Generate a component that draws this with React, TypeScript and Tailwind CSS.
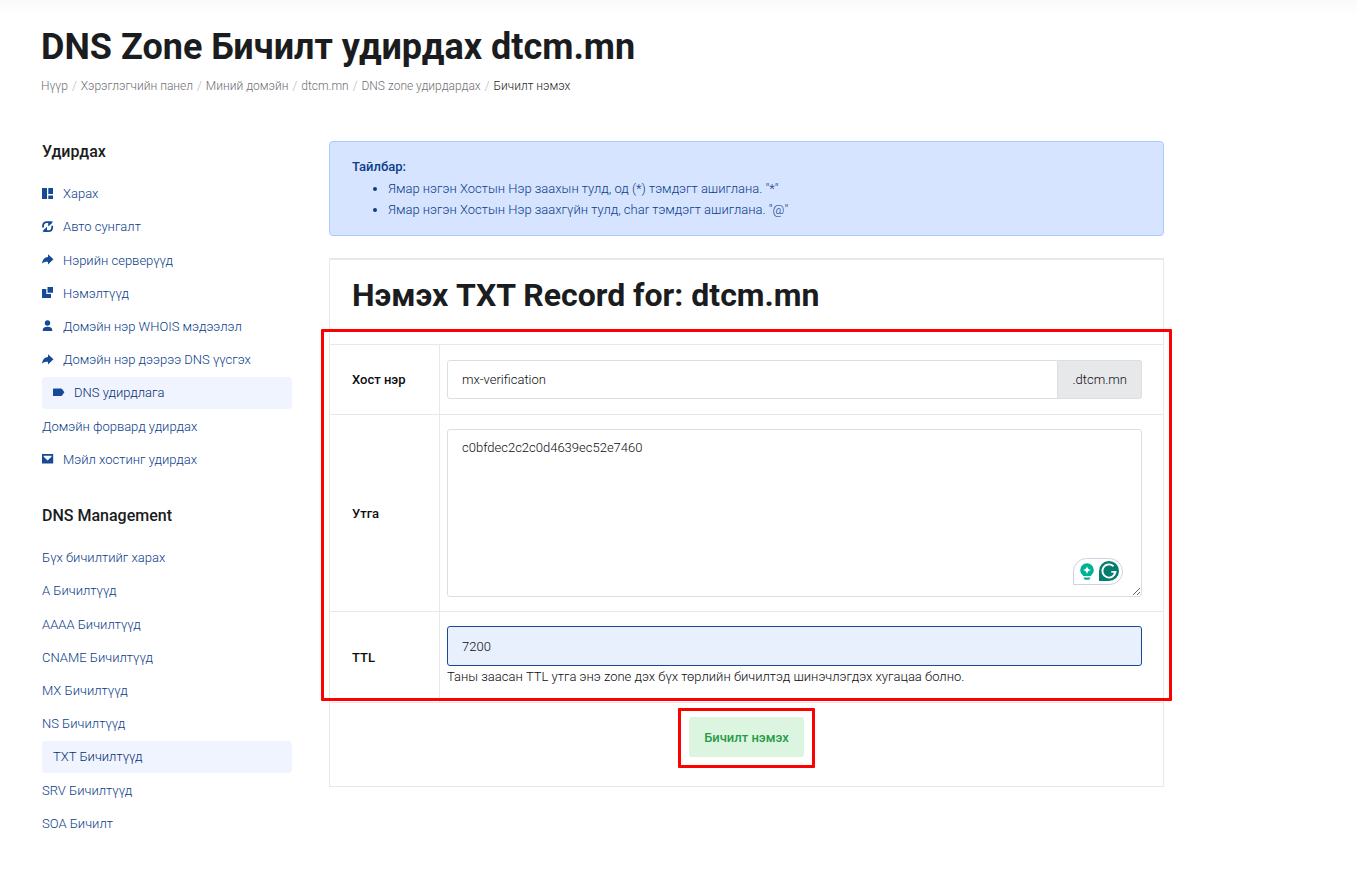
import React from "react";

type NavItem = { label: string; icon?: React.ReactNode; active?: boolean };

const Icon = ({ children }: { children: React.ReactNode }) => (
  <svg viewBox="0 0 12 12" className="h-3 w-3 shrink-0 text-[#174a96]" fill="currentColor" aria-hidden="true">
    {children}
  </svg>
);

const ArrowIcon = () => (
  <Icon>
    <path d="M6 .3 11.500 5.300 6 10.500V7.900C3.800 7.700 1.800 8 0 9.600.4 5.600 3 3.200 6 3Z" />
  </Icon>
);

const manageItems: NavItem[] = [
  {
    label: "Харах",
    icon: (
      <Icon>
        <path d="M0 0h5v11H0zM6.300 0H11v6H6.300zM6.300 7.500H11V11H6.300z" />
      </Icon>
    ),
  },
  {
    label: "Авто сунгалт",
    icon: (
      <Icon>
        <path
          d="M1 6.600V5.400C1 3 2.600 1.200 5 1.200H9.500M10.200 4.800v1.400c0 2.400-1.600 4-4 4H2"
          fill="none"
          stroke="currentColor"
          strokeWidth="1.800"
        />
        <path d="M11.200 0 6.500 5V2zM.2 11.400 4.800 6.400v3zM6.200 1.500h4.500L6.200 5.600zM5 9.900H.6L5 5.800z" />
      </Icon>
    ),
  },
  { label: "Нэрийн серверүүд", icon: <ArrowIcon /> },
  {
    label: "Нэмэлтүүд",
    icon: (
      <Icon>
        <path d="M5.500 0H11v5.700H5.500zM0 2h4.300v5H9v4H0z" />
      </Icon>
    ),
  },
  {
    label: "Домэйн нэр WHOIS мэдээлэл",
    icon: (
      <Icon>
        <circle cx="5.500" cy="3" r="2.700" />
        <path d="M.8 11V9.800c0-2 2-3 4.700-3s4.700 1 4.700 3V11z" />
      </Icon>
    ),
  },
  { label: "Домэйн нэр дээрээ DNS үүсгэх", icon: <ArrowIcon /> },
  {
    label: "DNS удирдлага",
    active: true,
    icon: (
      <Icon>
        <path d="M0 2.200Q0 1.600.6 1.600H8q.6 0 1 .5L11.400 5.300 9 8.600Q8.600 9.100 8 9.100H.6Q0 9.100 0 8.500z" />
      </Icon>
    ),
  },
  { label: "Домэйн форвард удирдах" },
  {
    label: "Мэйл хостинг удирдах",
    icon: (
      <Icon>
        <path fillRule="evenodd" d="M0 1h11.200v9.500H0zM1.700 2.700v1L5.600 7.600l3.900-3.900v-1z" />
      </Icon>
    ),
  },
];

const dnsItems: NavItem[] = [
  { label: "Бүх бичилтийг харах" },
  { label: "A Бичилтүүд" },
  { label: "AAAA Бичилтүүд" },
  { label: "CNAME Бичилтүүд" },
  { label: "MX Бичилтүүд" },
  { label: "NS Бичилтүүд" },
  { label: "TXT Бичилтүүд", active: true },
  { label: "SRV Бичилтүүд" },
  { label: "SOA Бичилт" },
];

const crumbs = ["Нүүр", "Хэрэглэгчийн панел", "Миний домэйн", "dtcm.mn", "DNS zone удирдардах"];

function NavSection({ title, items }: { title: string; items: NavItem[] }) {
  return (
    <nav aria-label={title}>
      <h2 className="mb-[14px] text-base leading-[22px] font-medium text-[#1a1c20]">{title}</h2>
      <ul className="grid min-h-[299px] auto-rows-fr items-center">
        {items.map((item) => (
          <li key={item.label}>
            <a
              href="#"
              aria-current={item.active ? "page" : undefined}
              className={
                item.active
                  ? "flex h-8 items-center gap-[9px] rounded bg-[#f0f4ff] pl-[11px] text-[#062f74]"
                  : "flex h-8 items-center gap-[9px] text-[#0b3d8a]"
              }
            >
              {item.icon}
              {item.label}
            </a>
          </li>
        ))}
      </ul>
    </nav>
  );
}

function FieldRow({ id, label, children }: { id: string; label: string; children: React.ReactNode }) {
  return (
    <div className="grid grid-cols-[110px_1fr] border-t border-[#e7e8ea]">
      <label htmlFor={id} className="flex items-center border-r border-[#e7e8ea] pl-[22px] font-medium text-[#0c0d10]">
        {label}
      </label>
      <div className="py-[14px] pr-[21px] pl-[7px]">{children}</div>
    </div>
  );
}

export default function App() {
  return (
    <div className="min-h-screen bg-white bg-linear-to-b from-[#fafafa] to-white to-[16px] pb-10 font-['Roboto',sans-serif] text-[13px] leading-[21px] font-light text-[#0c0d10]">
      <header className="px-[41px] pt-6">
        <h1 className="text-4xl leading-[46px] font-bold text-[#1a1c20]">DNS Zone Бичилт удирдах dtcm.mn</h1>
        <nav aria-label="Breadcrumb" className="mt-[6px]">
          <ol className="flex flex-wrap text-xs leading-5 text-[#6f7075]">
            {crumbs.map((crumb) => (
              <li key={crumb}>
                <a href="#">{crumb}</a>
                <span className="px-1 text-[#b5b6ba]">/</span>
              </li>
            ))}
            <li className="text-[#26272d]" aria-current="page">
              Бичилт нэмэх
            </li>
          </ol>
        </nav>
      </header>

      <div className="mt-[45px] flex max-w-[1164px] items-start gap-[37px] pl-[42px]">
        <aside className="flex w-[250px] shrink-0 flex-col gap-[29px]">
          <NavSection title="Удирдах" items={manageItems} />
          <NavSection title="DNS Management" items={dnsItems} />
        </aside>

        <main className="min-w-0 flex-1">
          <section className="rounded border border-[#adc8ff] bg-[#d6e4ff] px-[22px] pt-[14px] pb-[15px] text-[#0b3d8a]">
            <strong className="mb-px block font-medium">Тайлбар:</strong>
            <ul className="list-disc pl-9">
              <li>Ямар нэгэн Хостын Нэр заахын тулд, од (*) тэмдэгт ашиглана. "*"</li>
              <li>Ямар нэгэн Хостын Нэр заахгүйн тулд, char тэмдэгт ашиглана. "@"</li>
            </ul>
          </section>

          <form className="mt-[22px] border border-t-2 border-[#e7e8ea]" onSubmit={(e) => e.preventDefault()}>
            <h2 className="px-[22px] pt-[15px] pb-[29px] text-[32px] leading-10 font-bold text-[#1a1c20]">
              Нэмэх TXT Record for: dtcm.mn
            </h2>

            <div className="relative">
              <FieldRow id="host" label="Хост нэр">
                <div className="my-px flex h-[39px]">
                  <input
                    id="host"
                    defaultValue="mx-verification"
                    className="min-w-0 flex-1 rounded-l-[3px] border border-[#dddee1] px-[14px] outline-none"
                  />
                  <span className="flex items-center rounded-r-[3px] border border-l-0 border-[#dddee1] bg-[#e7e8ea] px-[14px]">
                    .dtcm.mn
                  </span>
                </div>
              </FieldRow>

              <FieldRow id="value" label="Утга">
                <div className="relative">
                  <textarea
                    id="value"
                    defaultValue="c0bfdec2c2c0d4639ec52e7460"
                    className="block h-[168px] w-full rounded-[3px] border border-[#dddee1] px-[14px] py-[7px] outline-none"
                  />
                  <svg
                    viewBox="0 0 50 27"
                    className="absolute right-[19px] bottom-3 h-[27px] w-[50px]"
                    aria-hidden="true"
                  >
                    <path
                      d="M.5 26.500V13.500a13 13 0 0 1 13-13h23a13 13 0 0 1 0 26z"
                      fill="#fff"
                      stroke="#cfd1de"
                    />
                    <path
                      d="M14 5.300a6.800 6.800 0 0 0-6.800 6.800c0 2.400 1.200 4 2.700 5.300.4.400.6.700.6 1.100h7c0-.4.200-.7.600-1.100 1.500-1.300 2.700-2.900 2.700-5.300A6.800 6.800 0 0 0 14 5.300zM10.500 19.500h7l-.7 1.500c-.2.500-.6.800-1.100.8h-3.400c-.5 0-.9-.3-1.100-.8z"
                      fill="#00b295"
                    />
                    <path d="M9.500 18.500h9" stroke="#fff" />
                    <path
                      d="M14 8c.5 2.600 1.500 3.600 4.100 4.100-2.600.5-3.600 1.500-4.100 4.100-.5-2.600-1.500-3.600-4.100-4.100C12.500 11.600 13.500 10.600 14 8z"
                      fill="#fff"
                    />
                    <path d="M26 23V13.200A10 10 0 1 1 36 23z" fill="#027e6f" />
                    <path
                      d="M40.500 8.200a6.600 6.600 0 1 0 2 5.700h-4.200M42.500 13.900l-1.700 3.600"
                      fill="none"
                      stroke="#fff"
                      strokeWidth="1.900"
                    />
                  </svg>
                </div>
              </FieldRow>

              <FieldRow id="ttl" label="TTL">
                <input
                  id="ttl"
                  defaultValue="7200"
                  className="block h-10 w-full rounded-[3px] border border-[#174a96] bg-[#e8f0fe] px-[14px] outline-none"
                />
                <p className="mb-px">
                  Таны заасан TTL утга энэ zone дэх бүх төрлийн бичилтэд шинэчлэгдэх хугацаа болно.
                </p>
              </FieldRow>
              <div className="pointer-events-none absolute -inset-x-[9px] -top-[15px] bottom-px rounded-[1px] border-3 border-[#ff0000]" />
            </div>

            <div className="flex justify-center border-t border-[#e7e8ea] pt-[14px] pb-[29px]">
              <div className="relative">
                <button type="submit" className="h-10 rounded-[3px] bg-[#dbf5e0] px-[15px] font-medium text-[#2a9a4a]">
                  Бичилт нэмэх
                </button>
                <div className="pointer-events-none absolute -inset-x-[11px] -top-[9px] -bottom-[11px] rounded-[1px] border-3 border-[#ff0000]" />
              </div>
            </div>
          </form>
        </main>
      </div>
    </div>
  );
}
